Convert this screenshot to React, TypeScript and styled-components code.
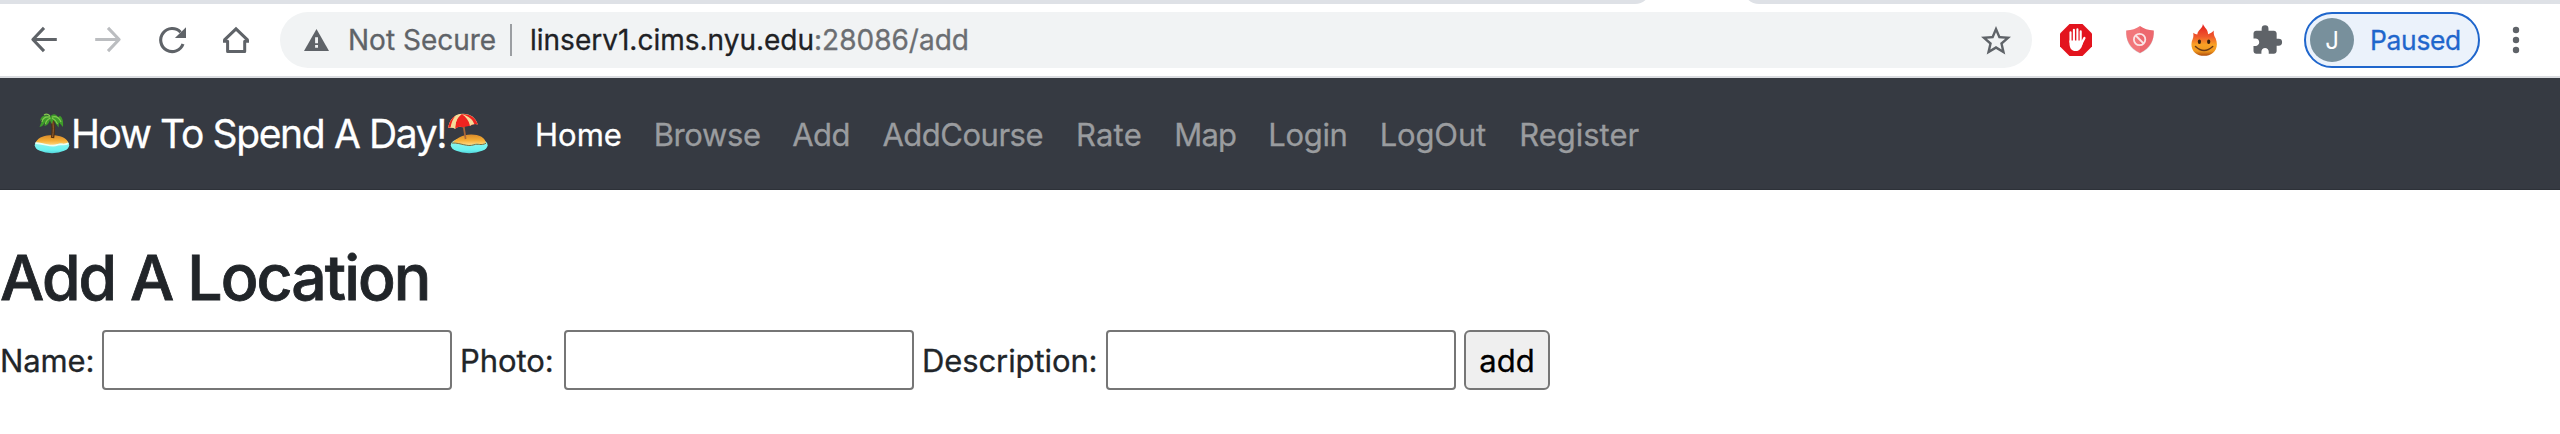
import React from 'react';
import styled, { createGlobalStyle } from 'styled-components';

const GlobalStyle = createGlobalStyle`
  *, *::before, *::after { box-sizing: border-box; }
  body {
    margin: 0;
    background: #fff;
    color: #212529;
    font-family: Inter, 'Liberation Sans', sans-serif;
    -webkit-text-stroke: 0.3px currentColor;
    overflow: hidden;
  }
`;

const Page = styled.div`
  display: flex;
  flex-direction: column;
  width: 2560px;
  height: 434px;
  background: #fff;
`;

const TabStrip = styled.div`
  display: flex;
  justify-content: space-between;
  height: 4px;
  overflow: hidden;
`;

const TabEdge = styled.div<{ $side: 'left' | 'right' }>`
  height: 20px;
  margin-top: -16px;
  width: ${(p) => (p.$side === 'left' ? 1651 : 817)}px;
  background: #dee1e6;
  border-radius: ${(p) => (p.$side === 'left' ? '0 0 16px 0' : '0 0 0 16px')};
`;

const Toolbar = styled.div`
  display: flex;
  align-items: center;
  height: 74px;
  padding: 0 12px;
  border-bottom: 2px solid #dadce0;
`;

const IconSlot = styled.span`
  display: flex;
  align-items: center;
  justify-content: center;
  width: 64px;
  height: 56px;
  color: #5f6368;
`;

const Omnibox = styled.div`
  display: flex;
  align-items: center;
  width: 1752px;
  height: 56px;
  margin: 0 12px;
  padding: 0 18px 0 24px;
  border-radius: 28px;
  background: #f1f3f4;
  font-size: 28px;
  line-height: 56px;
  color: #5f6368;
  white-space: nowrap;

  > svg:last-child { margin: 1px 0 0 auto; }
`;

const Security = styled.span`
  width: 160px;
  margin-left: 19px;
`;

const Divider = styled.span`
  width: 2px;
  height: 32px;
  margin: 0 18px 0 2px;
  background: #9b9ea2;
`;

const Url = styled.span`
  color: #6b6e72;
`;

const Host = styled.span`
  color: #202124;
  -webkit-text-stroke: 0.3px #202124;
`;

const ProfilePill = styled.div`
  display: flex;
  align-items: center;
  width: 176px;
  height: 56px;
  margin: 0 4px;
  padding-left: 4px;
  border: 2px solid #1f66cc;
  border-radius: 28px;
  background: #ebf2fb;
  color: #1f66cc;
  font-size: 26.4px;
  font-weight: 400;
  letter-spacing: -0.3px;
`;

const Avatar = styled.span`
  display: flex;
  align-items: center;
  justify-content: center;
  width: 44px;
  height: 44px;
  margin-right: 16px;
  border-radius: 50%;
  background: #78909c;
  color: #fff;
  font-size: 24px;
  -webkit-text-stroke: 0;
`;

const Navbar = styled.nav`
  display: flex;
  align-items: center;
  height: 112px;
  padding-left: 32px;
  background: #363a42;
  border-bottom: 1px solid #2d3138;
`;

const Brand = styled.a`
  display: flex;
  align-items: center;
  width: 503px;
  color: #fff;
  font-size: 39px;
  line-height: 60px;
  letter-spacing: -1.36px;
  white-space: nowrap;
`;

const BrandText = styled.span`
  width: 376px;
  margin-left: -1px;
`;

const NavList = styled.ul`
  display: flex;
  gap: 32px;
  margin: 0;
  padding: 2px 0 0;
  list-style: none;
`;

const NavItem = styled.li<{ $width: number; $tracking: number; $active?: boolean }>`
  width: ${(p) => p.$width}px;
  color: ${(p) => (p.$active ? '#fff' : '#9a9c9f')};
  font-size: 31px;
  line-height: 48px;
  letter-spacing: ${(p) => p.$tracking}px;
  white-space: nowrap;
`;

const Title = styled.h1`
  margin: 49px 0 0;
  font-size: 62.5px;
  font-weight: 500;
  line-height: 77px;
  letter-spacing: -1.92px;
  -webkit-text-stroke: 0.8px currentColor;
`;

const Form = styled.form`
  display: flex;
  align-items: center;
  height: 60px;
  margin-top: 14px;
  font-size: 31px;
`;

const Label = styled.label<{ $width: number }>`
  width: ${(p) => p.$width}px;
  padding-top: 1px;
  letter-spacing: -0.1px;
  white-space: nowrap;
`;

const Field = styled.input`
  width: 350px;
  height: 60px;
  margin-right: 8px;
  border: 2px solid #767676;
  border-radius: 4px;
  background: #fff;
  outline: none;
`;

const Submit = styled.button`
  width: 86px;
  height: 60px;
  padding: 1px 0 0;
  border: 2px solid #767676;
  border-radius: 6px;
  background: #efefef;
  color: #000;
  font: 400 31px Inter, 'Liberation Sans', sans-serif;
`;

const line = { fill: 'none', stroke: 'currentColor', strokeWidth: 3.1 };

const BackIcon = () => (
  <svg width="32" height="32" viewBox="0 0 32 32" {...line}>
    <path d="M16 3.9 4.9 15.5 16 27.1M4.5 15.5H28.8" strokeLinejoin="round" />
  </svg>
);

const ForwardIcon = () => (
  <svg width="32" height="32" viewBox="0 0 32 32" {...line} stroke="#bbbdc0">
    <path d="M16 3.9 27.1 15.5 16 27.1M27.5 15.5H3.2" strokeLinejoin="round" />
  </svg>
);

const ReloadIcon = () => (
  <svg width="32" height="32" viewBox="0 0 32 32" {...line}>
    <path d="M27 20A11.5 11.5 0 1 1 24.6 8.2" />
    <path d="M30 3.2V14H18.9Z" fill="currentColor" stroke="none" />
  </svg>
);

const HomeIcon = () => (
  <svg width="32" height="32" viewBox="0 0 32 32" {...line}>
    <path d="M4 16.4 16 4.9 28 16.4" />
    <path d="M3 17.2H7.6V27.4H24.7V17.2H29" strokeLinejoin="round" strokeWidth="3" />
  </svg>
);

const WarningIcon = () => (
  <svg width="25" height="22" viewBox="0 0 25 22">
    <path d="M12.5 0 25 22H0Z" fill="#5f6368" />
    <path d="M11.1 8.2h2.9v6h-2.9zM11.1 16h2.9v2.8h-2.9z" fill="#f1f3f4" />
  </svg>
);

const StarIcon = () => (
  <svg width="36" height="36" viewBox="0 0 24 24" fill="#5f6368">
    <path d="M22 9.24l-7.19-.62L12 2 9.19 8.63 2 9.24l5.46 4.73L5.82 21 12 17.27 18.18 21l-1.63-7.03L22 9.24zM12 15.4l-3.76 2.27 1-4.28-3.32-2.88 4.38-.38L12 6.1l1.71 4.04 4.38.38-3.32 2.88 1 4.28L12 15.4z" />
  </svg>
);

const BlockerIcon = () => (
  <svg width="32" height="32" viewBox="0 0 32 32">
    <path d="M9.5 0H22.5L32 9.5V22.5L22.5 32H9.5L0 22.5V9.5Z" fill="#e3141e" />
    <g stroke="#fff" strokeLinecap="round" fill="none">
      <path d="M10.5 8.2V18M13.9 5.8V17M17.4 5.3V17M20.7 7.4V18" strokeWidth="2.1" />
      <path d="M20.6 21.3 24.4 14" strokeWidth="2.4" />
    </g>
    <path d="M9.45 16.6H21.75V18.4L23 18.8C21.8 24 19.8 27.1 15.8 27.1C11.4 27.1 9.45 24 9.45 19Z" fill="#fff" />
  </svg>
);

const ShieldIcon = () => (
  <svg width="32" height="32" viewBox="0 0 32 32">
    <path d="M16 2.5C12.3 5.1 7.7 6.8 2.4 7.1C1.7 16.5 5 24.7 16 29.4C27 24.7 30.3 16.5 29.6 7.1C24.3 6.8 19.7 5.1 16 2.5Z" fill="#d9dcde" />
    <path d="M16 2C12.3 4.8 7.7 6.2 2.2 6.4C1.8 16 5.6 24 16 29Z" fill="#f2777b" />
    <path d="M16 2C19.7 4.8 24.3 6.2 29.8 6.4C30.2 16 26.4 24 16 29Z" fill="#ed686e" />
    <g fill="none" stroke="#fbe3e4" strokeWidth="1.8">
      <circle cx="15.6" cy="15.5" r="5.7" />
      <path d="M11.7 11.5 19.6 19.5" />
    </g>
  </svg>
);

const FlameIcon = () => (
  <svg width="32" height="32" viewBox="0 0 32 32">
    <defs>
      <linearGradient id="flame" x1="0" y1="0" x2="0" y2="1">
        <stop offset="0" stopColor="#e51d1f" />
        <stop offset=".4" stopColor="#ef5a2c" />
        <stop offset=".65" stopColor="#f9a124" />
        <stop offset=".85" stopColor="#f0981f" />
        <stop offset="1" stopColor="#ad4a0c" />
      </linearGradient>
    </defs>
    <path d="M14.9 0C16.2 3.6 19.8 4.8 20.1 10.2C22.5 9.8 24.3 8.2 25.7 6.6C25.6 9.7 26 12 27.7 14.4C30 20.2 28.8 25.7 24.8 29C20.1 32.8 11.8 32.8 7.2 28.9C3 25.4 2.6 19.2 4.6 15.3C5.7 12.9 5.4 10.8 5.3 8.7C6.7 10 8 10.4 9.3 10.4C9.8 5.8 14.7 4.5 14.9 0Z" fill="url(#flame)" />
    <ellipse cx="11.4" cy="17.8" rx="1.6" ry="2.3" fill="#35200f" />
    <ellipse cx="20.7" cy="17.8" rx="1.6" ry="2.3" fill="#35200f" />
    <path d="M7.5 22.5Q16 30.5 24.7 22.5" fill="none" stroke="#6b3a18" strokeWidth="1.5" strokeLinecap="round" />
  </svg>
);

const PuzzleIcon = () => (
  <svg width="32" height="32" viewBox="0.9 .1 23.5 23.5" fill="currentColor">
    <path d="M20.5 11H19V7c0-1.1-.9-2-2-2h-4V3.5a2.5 2.5 0 0 0-5 0V5H4c-1.1 0-1.99.9-1.99 2v3.8H3.5c1.49 0 2.7 1.21 2.7 2.7s-1.21 2.7-2.7 2.7H2V20c0 1.1.9 2 2 2h3.8v-1.5c0-1.49 1.21-2.7 2.7-2.7s2.7 1.21 2.7 2.7V22H17c1.1 0 2-.9 2-2v-4h1.5a2.5 2.5 0 0 0 0-5z" />
  </svg>
);

const MenuIcon = () => (
  <svg width="32" height="32" viewBox="0 0 32 32" fill="currentColor">
    <circle cx="16" cy="6" r="3.2" />
    <circle cx="16" cy="16" r="3.2" />
    <circle cx="16" cy="26" r="3.2" />
  </svg>
);

const IslandGradients = ({ id }: { id: string }) => (
  <defs>
    <linearGradient id={`${id}-sea`} x1="0" y1="0" x2="0" y2="1">
      <stop offset="0" stopColor="#a5f5ee" />
      <stop offset=".8" stopColor="#6af2ef" />
      <stop offset="1" stopColor="#55d3da" />
    </linearGradient>
    <linearGradient id={`${id}-sand`} x1="0" y1="0" x2="0" y2="1">
      <stop offset="0" stopColor="#d98b2b" />
      <stop offset=".55" stopColor="#f5ae36" />
      <stop offset="1" stopColor="#ffd983" />
    </linearGradient>
  </defs>
);

const PalmIsland = () => (
  <svg width="40" height="42" viewBox="0 0 40 42">
    <IslandGradients id="palm" />
    <ellipse cx="20" cy="32.2" rx="17.2" ry="8" fill="url(#palm-sea)" />
    <path d="M3.6 29.5C7 23.6 13 22.3 20 22.3C28 22.3 34 24.6 36.4 29.7C32 33.1 29.5 29.2 25.5 31.2C20 34 14 30.6 3.6 29.5Z" fill="url(#palm-sand)" />
    <path d="M3.4 30.2C14 30.8 20 34.6 25.7 31.8C29.6 30.3 32 33 36.4 30.3" fill="none" stroke="#eafff5" strokeWidth="1.7" />
    <path d="M19.6 5C21.5 11 22 17 20.5 25" fill="none" stroke="#55300f" strokeWidth="3.4" />
    <path d="M20.6 8C21.5 13 21.6 18 20.6 24" fill="none" stroke="#976637" strokeWidth="1" />
    <path d="M18 4C13 .5 9 3 8 8L10.5 6.5 7.5 14C10 14 12 11.5 13 9L12.5 13C15.5 12.5 17.2 10 17.8 7L19.5 11 21.5 7 26.5 14.5 27 9.5 31 14C31.5 9.5 31 5 28 2.7L26 4.3C24 .3 20.3 0 18 4Z" fill="#3e9b2a" />
    <path d="M18 4Q11 3 10 9M18.5 5Q14 7 13.5 11M20 4Q26 2 29 9M20 5Q24 7 25.5 11M18 3Q15 0 12 2" fill="none" stroke="#83ca50" strokeWidth="1.2" />
  </svg>
);

const BeachIsland = () => (
  <svg width="42" height="42" viewBox="0 0 42 42">
    <IslandGradients id="beach" />
    <ellipse cx="22.2" cy="32.2" rx="18.4" ry="8" fill="url(#beach-sea)" />
    <path d="M5.5 29.5C10 25.5 15 21.7 24 21.6C32 21.5 37.5 24.3 39 29.7C34 32.5 31 29.5 27 31.2C21 33.5 13 30 5.5 29.5Z" fill="url(#beach-sand)" />
    <path d="M5 30C14 29.7 20 34.2 27 31.8C31 30.2 34 33 39 30.3" fill="none" stroke="#806c38" strokeWidth="1" />
    <path d="M16.5 12 18.6 26" stroke="#aa6739" strokeWidth="1.7" />
    <path d="M1.2 15C2.5 6.5 8 1 15.5 .8C23.3 .6 28.8 4.7 30.8 11.5Q27 10.2 23 12.7Q19.3 11.6 15.5 14.2Q11.5 12.6 8.2 15.8Q4.5 13.6 1.2 15Z" fill="#f4dc9a" />
    <path d="M14.7 .9C9.8 4.4 8.3 9.5 8.2 15.8Q11.5 12.6 15.5 14.2L23 12.7Q27 10.2 30.8 11.5C28.5 4.5 23 .6 14.7 .9Z" fill="#ee2420" />
    <path d="M14.7 .9C9.8 4.4 8.3 9.5 8.2 15.8Q4.5 13.6 1.2 15C2.5 6.5 7 1.6 14.7 .9Z" fill="#f4dc9a" />
    <path d="M1.2 15C2 9.5 4.5 5 8.5 2.7C5.8 6 4.4 9.5 3.6 14.2Z" fill="#ee2420" />
    <path d="M14.7 .9C21 2.7 26 6.4 27.2 11Q25 11.2 23 12.7C21.8 7.4 19 3.5 14.7 .9Z" fill="#f4dc9a" />
  </svg>
);

const links = [
  { text: 'Home', width: 86.7, tracking: 0, active: true },
  { text: 'Browse', width: 106.5, tracking: -0.4 },
  { text: 'Add', width: 58.3, tracking: -0.5 },
  { text: 'AddCourse', width: 161.5, tracking: -0.5 },
  { text: 'Rate', width: 66.3, tracking: 0.2 },
  { text: 'Map', width: 61.9, tracking: -0.9 },
  { text: 'Login', width: 79.5, tracking: -0.3 },
  { text: 'LogOut', width: 107.5, tracking: -0.15 },
  { text: 'Register', width: 120, tracking: 0 },
];

export default function App() {
  return (
    <Page>
      <GlobalStyle />
      <TabStrip>
        <TabEdge $side="left" />
        <TabEdge $side="right" />
      </TabStrip>
      <Toolbar>
        <IconSlot><BackIcon /></IconSlot>
        <IconSlot><ForwardIcon /></IconSlot>
        <IconSlot><ReloadIcon /></IconSlot>
        <IconSlot><HomeIcon /></IconSlot>
        <Omnibox>
          <WarningIcon />
          <Security>Not Secure</Security>
          <Divider />
          <Url><Host>linserv1.cims.nyu.edu</Host>:28086/add</Url>
          <StarIcon />
        </Omnibox>
        <IconSlot><BlockerIcon /></IconSlot>
        <IconSlot><ShieldIcon /></IconSlot>
        <IconSlot><FlameIcon /></IconSlot>
        <IconSlot><PuzzleIcon /></IconSlot>
        <ProfilePill>
          <Avatar>J</Avatar>
          Paused
        </ProfilePill>
        <IconSlot><MenuIcon /></IconSlot>
      </Toolbar>
      <Navbar>
        <Brand>
          <PalmIsland />
          <BrandText>How To Spend A Day!</BrandText>
          <BeachIsland />
        </Brand>
        <NavList>
          {links.map((l) => (
            <NavItem key={l.text} $width={l.width} $tracking={l.tracking} $active={l.active}>
              {l.text}
            </NavItem>
          ))}
        </NavList>
      </Navbar>
      <Title>Add A Location</Title>
      <Form>
        <Label $width={102}>Name:</Label>
        <Field />
        <Label $width={104}>Photo:</Label>
        <Field />
        <Label $width={184}>Description:</Label>
        <Field />
        <Submit type="button">add</Submit>
      </Form>
    </Page>
  );
}
